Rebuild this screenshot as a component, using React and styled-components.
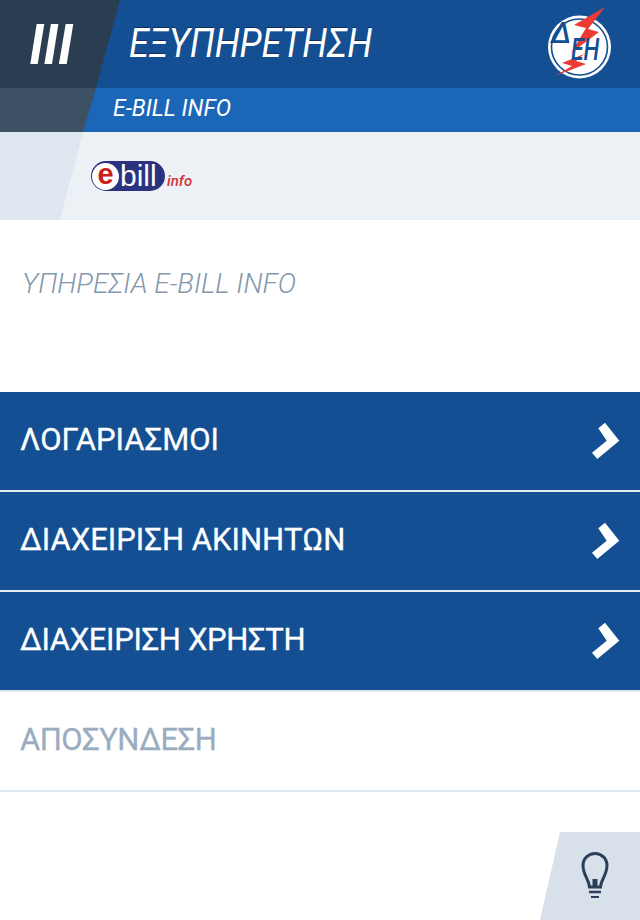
import styled, { createGlobalStyle } from "styled-components";

const menu = [
    { label: "ΛΟΓΑΡΙΑΣΜΟΙ", spacing: 0 },
    { label: "ΔΙΑΧΕΙΡΙΣΗ ΑΚΙΝΗΤΩΝ", spacing: 0 },
    { label: "ΔΙΑΧΕΙΡΙΣΗ ΧΡΗΣΤΗ", spacing: -0.35 },
];

export default function App() {
    return (
        <Page>
            <GlobalStyle />
            <Band $height={88} $left="#2b3d50">
                <MenuIcon viewBox="0 0 96 88">
                    <polygon fill="#fff" points="36.7,24 44.3,24 37.7,64 30.3,64" />
                    <polygon fill="#fff" points="50.9,24 58.4,24 52,64 44.4,64" />
                    <polygon fill="#fff" points="65.7,24 73.3,24 66.7,64 58.9,64" />
                </MenuIcon>
                <BandFill $bg="#134f92" $top={120} $bottom={96}>
                    <Title>ΕΞΥΠΗΡΕΤΗΣΗ</Title>
                    <Logo viewBox="0 0 80 88">
                        <circle cx="39.5" cy="47" r="31.5" fill="#fff" />
                        <circle cx="39.5" cy="47" r="28" fill="none" stroke="#134f92" strokeWidth="1.6" />
                        <polygon fill="#ee3a34" points="65,7 34,25 46,28 31,53 59,32 48,29" />
                        <polygon fill="#ee3a34" points="44,54 22,63 32,66 15,76 46,64 36,61" />
                        <LogoText x="11" y="43" fontSize="29">Δ</LogoText>
                        <LogoText transform="translate(31 60) scale(0.74 1)" fontSize="31">ΕΗ</LogoText>
                    </Logo>
                </BandFill>
            </Band>
            <Band $height={44} $left="#3d5064">
                <BandFill $bg="#1c66b8" $top={96} $bottom={83}>
                    <Subtitle>E-BILL INFO</Subtitle>
                </BandFill>
            </Band>
            <Band $height={88} $left="#dee6ef">
                <BandFill $bg="#ecf1f6" $top={83} $bottom={60}>
                    <EbillLogo>
                        <EbillPill>
                            <EbillCircle>e</EbillCircle>
                            <EbillName>bill</EbillName>
                        </EbillPill>
                        <EbillInfo>info</EbillInfo>
                    </EbillLogo>
                </BandFill>
            </Band>
            <Intro>ΥΠΗΡΕΣΙΑ E-BILL INFO</Intro>
            <Menu>
                {menu.map((item, i) => (
                    <MenuRow key={item.label} $last={i === menu.length - 1} $spacing={item.spacing}>
                        <span>{item.label}</span>
                        <Chevron viewBox="0 0 30 38">
                            <polygon fill="#fff" points="6.3,6.3 13,0.7 27.3,18.7 5.3,37 0,30.7 14.7,18.7" />
                        </Chevron>
                    </MenuRow>
                ))}
                <LogoutRow>ΑΠΟΣΥΝΔΕΣΗ</LogoutRow>
            </Menu>
            <Footer>
                <HelpButton>
                    <svg width="30" height="50" viewBox="0 0 30 50" fill="none" stroke="#2b4058">
                        <path strokeWidth="3" d="M9.5 36 C9 28 3 24 3 14.5 C3 7.5 8.5 2.5 15 2.5 C21.5 2.5 27 7.5 27 14.5 C27 24 21 28 20.5 36 Z" />
                        <path strokeWidth="0" fill="#2b4058" d="M12.5 36 V28 H17.5 V36 Z" />
                        <path strokeWidth="2.6" d="M9 41 H21" />
                        <path strokeWidth="2" d="M11 46 H19" />
                    </svg>
                </HelpButton>
            </Footer>
        </Page>
    );
}

const GlobalStyle = createGlobalStyle`
    html, body {
        margin: 0;
        padding: 0;
        background: #fff;
    }
    body {
        font-family: Roboto, "Noto Sans", sans-serif;
    }
`;

const Page = styled.div`
    width: 640px;
    height: 920px;
    display: flex;
    flex-direction: column;
    overflow: hidden;
`;

const Band = styled.div`
    height: ${(p) => p.$height}px;
    background-color: ${(p) => p.$left};
    display: grid;
    flex-shrink: 0;

    > * {
        grid-area: 1 / 1;
    }
`;

const BandFill = styled.div`
    background-color: ${(p) => p.$bg};
    clip-path: polygon(${(p) => p.$top}px 0, 100% 0, 100% 100%, ${(p) => p.$bottom}px 100%);
    display: flex;
    align-items: center;
    justify-content: space-between;
`;

const MenuIcon = styled.svg`
    width: 96px;
    height: 88px;
    z-index: 1;
`;

const Title = styled.h1`
    margin: 0 0 2px 129px;
    font-size: 40px;
    font-weight: 400;
    font-style: italic;
    color: #fff;
    text-shadow: 0 -1px 0 #0c2f5e;
    transform: scaleX(0.9);
    transform-origin: left center;
`;

const Logo = styled.svg`
    width: 80px;
    height: 88px;
    margin-right: 20px;
`;

const LogoText = styled.text`
    font-family: Roboto, sans-serif;
    font-style: italic;
    font-weight: 500;
    fill: #134f92;
`;

const Subtitle = styled.div`
    margin: 0 0 3px 113px;
    font-size: 23px;
    font-style: italic;
    color: #fff;
`;

const EbillLogo = styled.div`
    margin-left: 91px;
    display: flex;
    align-items: flex-end;
`;

const EbillPill = styled.div`
    width: 74px;
    height: 30px;
    border-radius: 15px;
    background-color: #2b3380;
    display: flex;
    align-items: center;
`;

const EbillCircle = styled.div`
    width: 27px;
    height: 27px;
    margin-left: 1px;
    border-radius: 50%;
    background-color: #fff;
    color: #c9201b;
    font-family: "Liberation Sans", sans-serif;
    font-weight: 700;
    font-size: 29px;
    line-height: 23px;
    text-align: center;
`;

const EbillName = styled.span`
    margin-left: 1px;
    color: #fff;
    font-family: "Liberation Sans", sans-serif;
    font-size: 30px;
    line-height: 28px;
`;

const EbillInfo = styled.span`
    margin-left: 2px;
    margin-bottom: 1px;
    color: #d0343a;
    font-family: Roboto, sans-serif;
    font-style: italic;
    font-weight: 500;
    font-size: 15px;
    line-height: 18px;
`;

const Intro = styled.div`
    height: 172px;
    box-sizing: border-box;
    padding: 47px 0 0 22px;
    font-size: 27.8px;
    font-weight: 300;
    font-style: italic;
    color: #8497ab;
`;

const Menu = styled.div`
    display: flex;
    flex-direction: column;
`;

const MenuRow = styled.div`
    height: 98px;
    padding: 0 18px 0 20px;
    display: flex;
    align-items: center;
    justify-content: space-between;
    background-color: #134f92;
    border-bottom: 2px solid ${(p) => (p.$last ? "#dde6ef" : "#e4ebf2")};
    color: #fff;
    font-size: 31px;
    letter-spacing: ${(p) => p.$spacing}px;
    -webkit-text-stroke: 0.3px #fff;

    span {
        margin-bottom: 4px;
    }
`;

const Chevron = styled.svg`
    width: 30px;
    height: 38px;
`;

const LogoutRow = styled.div`
    height: 94px;
    padding: 0 20px 4px;
    display: flex;
    align-items: center;
    border-bottom: 2px solid #dde6ef;
    color: #9aadc0;
    font-size: 31px;
    letter-spacing: -0.5px;
    -webkit-text-stroke: 0.3px #9aadc0;
`;

const Footer = styled.div`
    margin-top: auto;
    display: flex;
    justify-content: flex-end;
`;

const HelpButton = styled.div`
    width: 100px;
    height: 88px;
    background-color: #d8e0ea;
    clip-path: polygon(20px 0, 100% 0, 100% 100%, 0 100%);
    display: flex;
    align-items: center;
    justify-content: center;
    padding-left: 10px;
    box-sizing: border-box;
`;
